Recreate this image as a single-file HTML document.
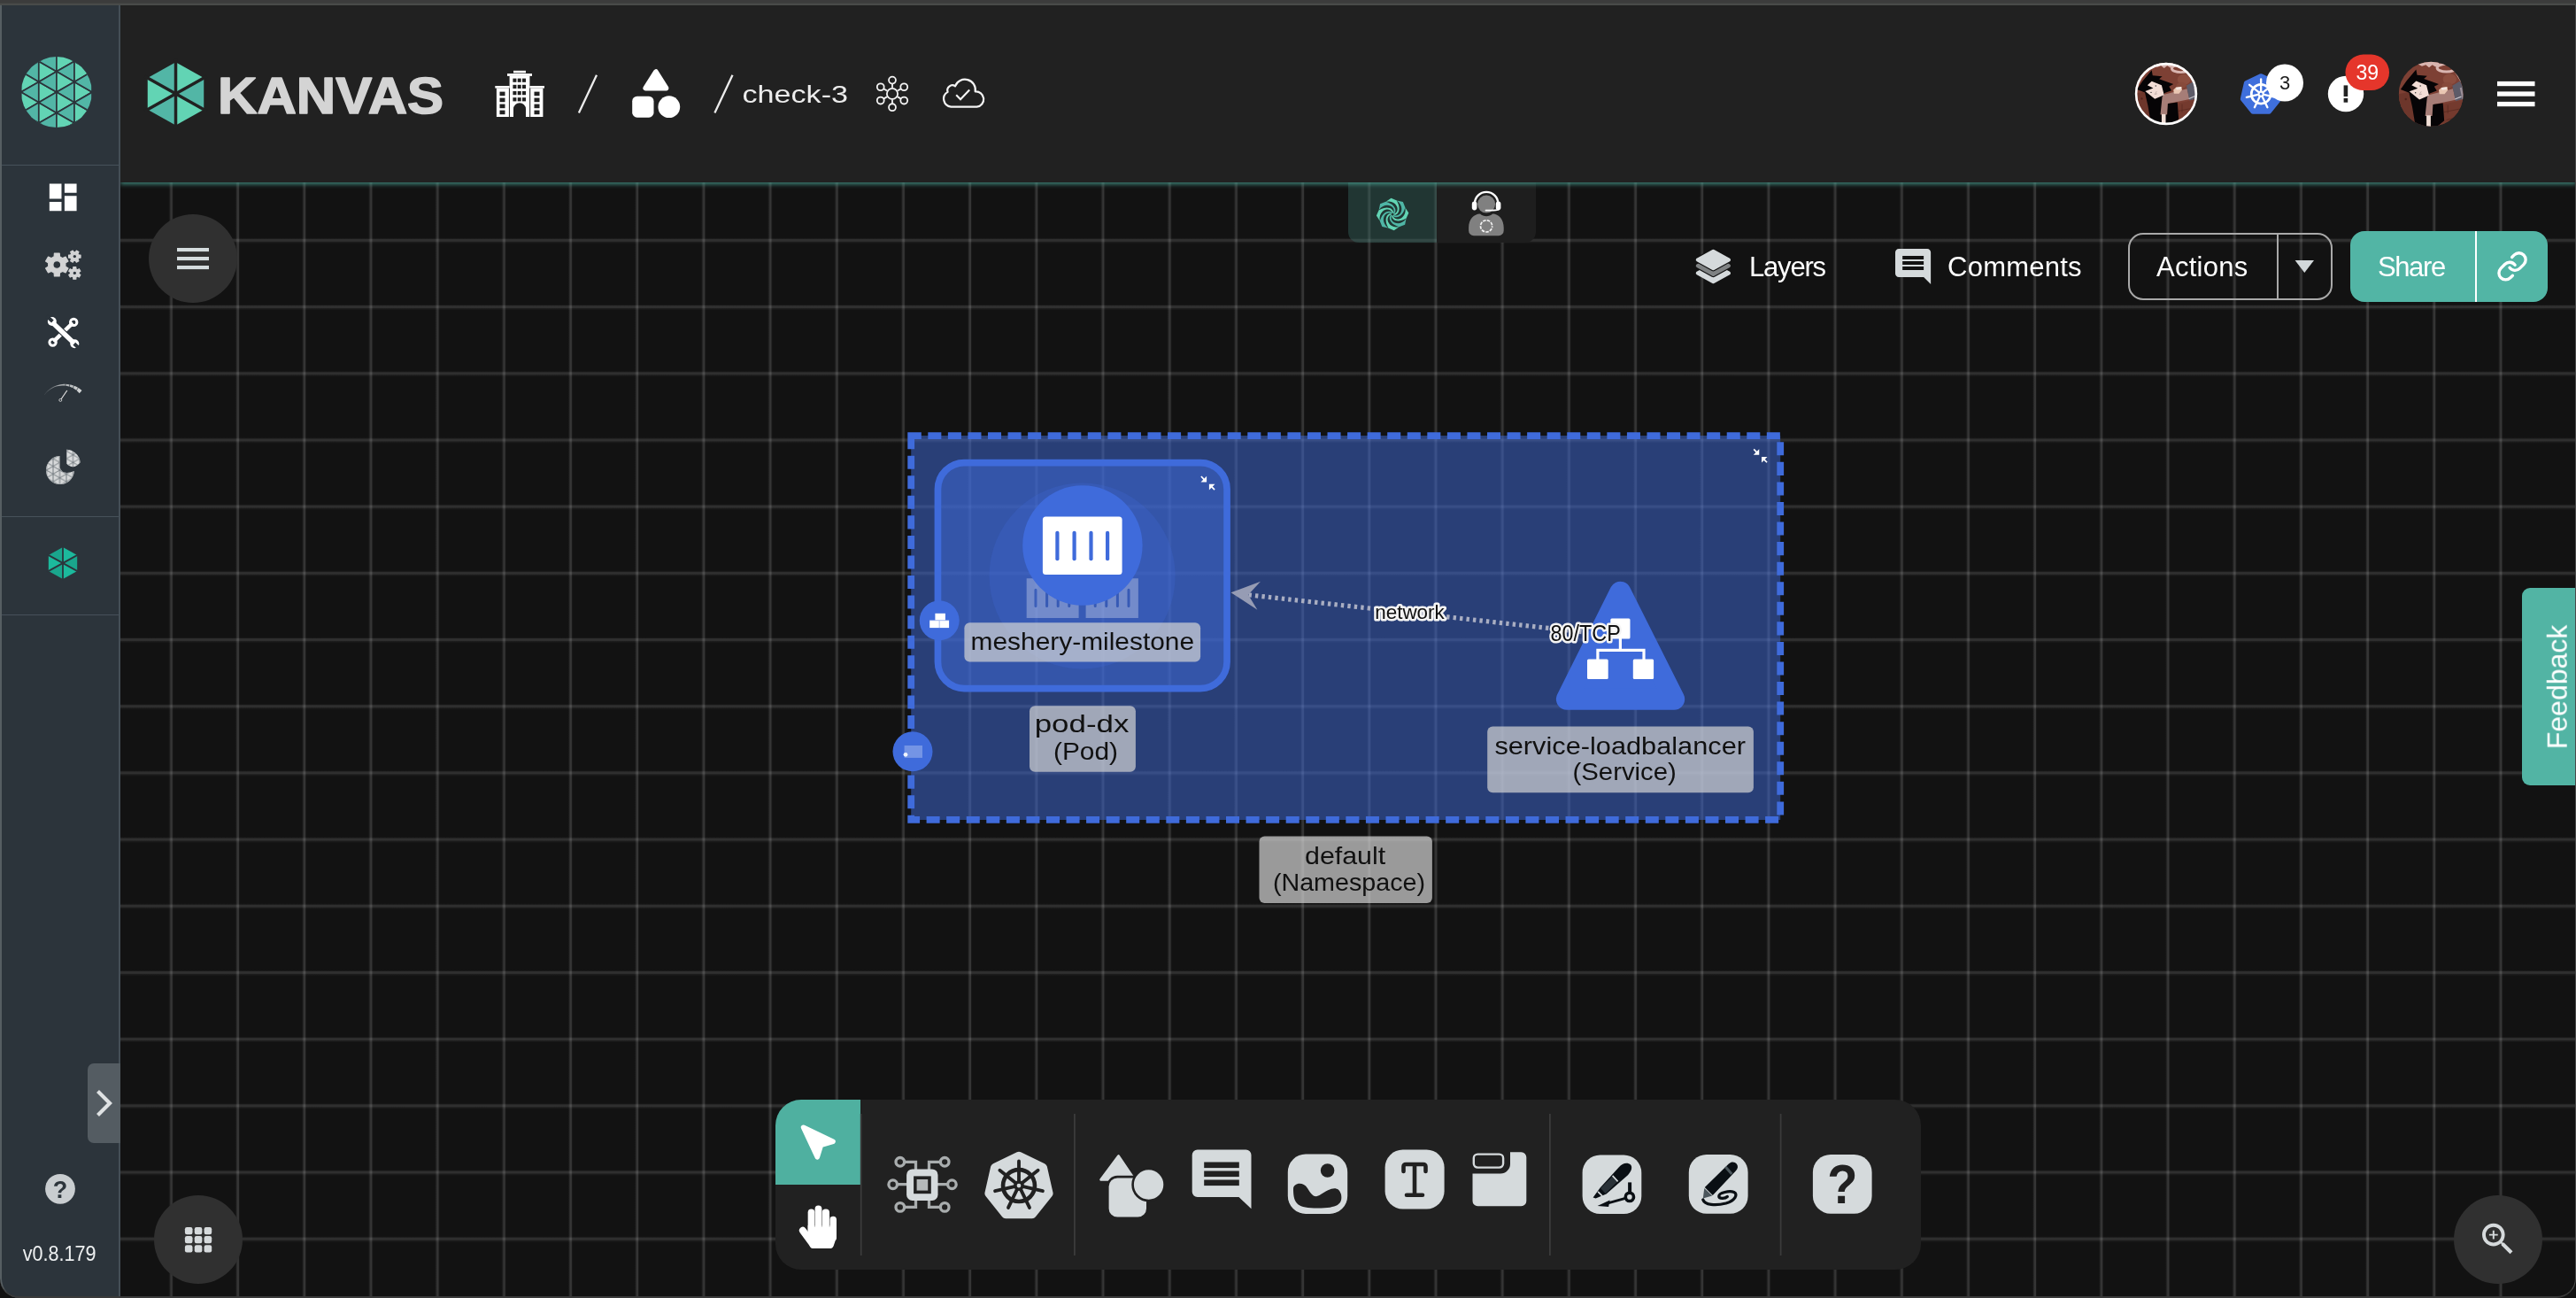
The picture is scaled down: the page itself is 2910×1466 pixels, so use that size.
<!DOCTYPE html><html lang="en"><head><meta charset="utf-8"><title>Kanvas | check-3</title><style>
*{box-sizing:border-box}
html,body{margin:0;padding:0}
body{width:2910px;height:1466px;overflow:hidden;background:#121212;font-family:"Liberation Sans",Arial,sans-serif;position:relative}
.abs{position:absolute;display:block}
svg.abs,.tbtn,#feedback span{will-change:transform}
#canvas{left:0;top:0;width:2910px;height:1466px;background-color:#121212;
 background-image:linear-gradient(to bottom,rgba(255,255,255,.025) 0,rgba(255,255,255,.03) 1.2px,rgba(255,255,255,.12) 1.5px,rgba(255,255,255,.12) 4.2px,rgba(255,255,255,.03) 4.5px,rgba(255,255,255,.025) 5.7px,transparent 5.7px);
 background-size:75.2px 75.2px;background-position:190.8px 268.9px}
#vgrid{left:0;top:0;width:2890px;height:1466px;
 background-image:linear-gradient(to right,rgba(255,255,255,.025) 0,rgba(255,255,255,.03) 1.3px,rgba(255,255,255,.15) 1.6px,rgba(255,255,255,.15) 3.8px,rgba(255,255,255,.03) 4.1px,rgba(255,255,255,.025) 5.4px,transparent 5.4px);
 background-size:75.2px 75.2px;background-position:190.8px 268.9px}
#topstrip{left:0;top:0;width:2910px;height:5.5px;background:linear-gradient(#3c3c3c 0,#3c3c3c 3.4px,#494b49 3.8px,#494b49 100%);z-index:9}
#sidebar{left:0;top:5.5px;width:136px;height:1460.5px;background:#2c343b;border-left:2px solid #565e62;border-right:2px solid #444e56;border-bottom-left-radius:22px;z-index:5}
#sidebar .div{position:absolute;left:0;width:132px;height:1.6px;background:#47515a}
#header{left:136px;top:5.5px;width:2774px;height:200.2px;background:#212121;box-shadow:0 2px 5px rgba(75,165,150,.8);z-index:4}
.fab{border-radius:50%;background:#303030;width:100px;height:100px}
#tabs{left:1523px;top:205.7px;width:212px;height:68.2px;border-radius:0 0 12px 12px;overflow:hidden}
#tabs .t1{position:absolute;left:0;top:0;width:100px;height:100%;background:rgba(58,112,104,.38)}
#tabs .t2{position:absolute;left:100px;top:0;width:112px;height:100%;background:#1e1e1e}
.tbtn{color:#fff;font-size:31px;line-height:36px;white-space:nowrap}
#actions{left:2404.3px;top:263.3px;width:230.8px;height:75.5px;border:2.2px solid #a9a9a9;border-radius:17px}
#actions .dv{position:absolute;left:165.5px;top:0;width:2.2px;height:100%;background:#a9a9a9}
#share{left:2655.1px;top:261px;width:222.9px;height:79.8px;background:#52b5a5;border-radius:16px}
#share .dv{position:absolute;left:141px;top:0;width:2.2px;height:100%;background:#fff}
#feedback{left:2849px;top:663.5px;width:61px;height:223.1px;background:#52b4a4;border-radius:9px 0 0 9px}
#feedback span{position:absolute;left:0;top:0;transform-origin:0 0;transform:translate(23.7px,182.2px) rotate(-90deg);color:#fff;font-size:32px;line-height:32px;white-space:nowrap;display:block}
#toolbar{left:876px;top:1241.7px;width:1294px;height:192.1px;background:#212121;border-radius:29px;overflow:hidden}
#toolbar .sel{position:absolute;left:0;top:0;width:96px;height:96.3px;background:#4fb0a0}
#winb{left:0;top:5.5px;width:2910px;height:1460.5px;border-right:1.7px solid #4a4a4a;border-bottom:2px solid #3a3a3a;border-radius:0 0 22px 22px;z-index:8;pointer-events:none}
</style></head><body>
<div id="canvas" class="abs"></div><div id="vgrid" class="abs"></div>
<svg class="abs" style="left:0;top:0" width="2910" height="1466" viewBox="0 0 2910 1466"><path d="M1029.2 492.1V925.9H2011.2V492.1Z" fill="rgba(63,107,219,0.5)" stroke="#3f6bdb" stroke-width="7.8" stroke-dasharray="15.04 7.52"/><rect x="1059.45" y="522.55" width="326.6" height="255" rx="30" fill="rgba(63,107,219,0.5)" stroke="#3f6bdb" stroke-width="7.7"/><circle cx="1222.6" cy="650.5" r="105" fill="rgba(63,107,219,0.25)"/><path d="M1159.7 653.2H1218.6V697.9H1159.7Z M1168.5 666.2a1.5 1.5 0 0 1 3 0v18.4a1.5 1.5 0 0 1-3 0z M1181.1 666.2a1.5 1.5 0 0 1 3 0v18.4a1.5 1.5 0 0 1-3 0z M1193.7 666.2a1.5 1.5 0 0 1 3 0v18.4a1.5 1.5 0 0 1-3 0z M1206.3 666.2a1.5 1.5 0 0 1 3 0v18.4a1.5 1.5 0 0 1-3 0z" fill="rgba(255,255,255,0.3)" fill-rule="evenodd"/><path d="M1226.6 653.2H1285.9V697.9H1226.6Z M1235.7 666.2a1.5 1.5 0 0 1 3 0v18.4a1.5 1.5 0 0 1-3 0z M1248.3 666.2a1.5 1.5 0 0 1 3 0v18.4a1.5 1.5 0 0 1-3 0z M1260.9 666.2a1.5 1.5 0 0 1 3 0v18.4a1.5 1.5 0 0 1-3 0z M1273.5 666.2a1.5 1.5 0 0 1 3 0v18.4a1.5 1.5 0 0 1-3 0z" fill="rgba(255,255,255,0.3)" fill-rule="evenodd"/><circle cx="1222.9" cy="616" r="67.7" fill="#3f6bdb"/><rect x="1177.9" y="583.6" width="89.7" height="65.3" rx="3.5" fill="#fff"/><line x1="1194.4" y1="601.8" x2="1194.4" y2="631.2" stroke="#3f6bdb" stroke-width="4.2" stroke-linecap="round"/><line x1="1213.6" y1="601.8" x2="1213.6" y2="631.2" stroke="#3f6bdb" stroke-width="4.2" stroke-linecap="round"/><line x1="1232.5" y1="601.8" x2="1232.5" y2="631.2" stroke="#3f6bdb" stroke-width="4.2" stroke-linecap="round"/><line x1="1251.1" y1="601.8" x2="1251.1" y2="631.2" stroke="#3f6bdb" stroke-width="4.2" stroke-linecap="round"/><g transform="translate(1356.3 537.4) scale(1)" fill="#fff"><path d="M0 1.2L1.2 0 4.2 3 6.8 0.4V7H0.2L2.9 4.3Z"/><path d="M16.4 15.2L15.2 16.4 12.2 13.4 9.6 16V9.4H16.2L13.5 12.1Z"/></g><g transform="translate(1980.6 506.8) scale(0.98)" fill="#fff"><path d="M0 1.2L1.2 0 4.2 3 6.8 0.4V7H0.2L2.9 4.3Z"/><path d="M16.4 15.2L15.2 16.4 12.2 13.4 9.6 16V9.4H16.2L13.5 12.1Z"/></g><rect x="1089.4" y="703.2" width="266.7" height="44.4" rx="6" fill="rgba(212,212,212,0.7)"/><text x="1096.6" y="734.3" font-family='"Liberation Sans", Arial, sans-serif' font-size="28" fill="#111" textLength="252.5" lengthAdjust="spacingAndGlyphs" >meshery-milestone</text><circle cx="1061.2" cy="700.8" r="22.5" fill="#3f6bdb"/><rect x="1056.4" y="692.8" width="11.5" height="8" fill="#fff"/><rect x="1050.2" y="700.4" width="21.9" height="8.7" fill="#fff"/><path d="M1061.2 700.4V709.1M1050.2 700.6H1072.1" stroke="rgba(63,107,219,0.35)" stroke-width="1.2"/><rect x="1163" y="797.3" width="119.9" height="74.5" rx="6" fill="rgba(212,212,212,0.7)"/><text x="1168.7" y="827" font-family='"Liberation Sans", Arial, sans-serif' font-size="28" fill="#111" textLength="106.7" lengthAdjust="spacingAndGlyphs" >pod-dx</text><text x="1190" y="857.5" font-family='"Liberation Sans", Arial, sans-serif' font-size="28" fill="#111" textLength="73" lengthAdjust="spacingAndGlyphs" >(Pod)</text><circle cx="1031" cy="848.8" r="22.5" fill="#3f6bdb"/><rect x="1021.6" y="842" width="20.4" height="13.9" fill="rgba(255,255,255,0.28)"/><circle cx="1023" cy="852.3" r="2.4" fill="#fff" opacity="0.9"/><line x1="1410.5" y1="671.9" x2="1812" y2="716.4" stroke="#a9aec2" stroke-width="5.2" stroke-dasharray="3.4 4.1"/><polygon points="1390.5,669.2 1424,656.8 1410.1,671.8 1420.4,688.7" fill="#969cb4"/><polygon points="1830.4,668.7 1769.9,789.7 1891.2,789.7" fill="#3f6bdb" stroke="#3f6bdb" stroke-width="24" stroke-linejoin="round"/><g fill="#fff"><rect x="1819.3" y="698.5" width="22.2" height="22.9" rx="1.5"/><rect x="1793" y="744.4" width="23.7" height="22.5" rx="1.5"/><rect x="1844.8" y="744.4" width="23.3" height="22.5" rx="1.5"/></g><path d="M1830.4 721V734.4M1804.9 745V734.4H1857V745" fill="none" stroke="#fff" stroke-width="3.2"/><text x="1553.2" y="698.9" font-family='"Liberation Sans", Arial, sans-serif' font-size="22.6" fill="#101010" textLength="78.6" lengthAdjust="spacingAndGlyphs" stroke="#f4f4f4" stroke-width="5.2" stroke-linejoin="round" paint-order="stroke">network</text><text x="1751.6" y="723.6" font-family='"Liberation Sans", Arial, sans-serif' font-size="26.6" fill="#101010" textLength="79.2" lengthAdjust="spacingAndGlyphs" stroke="#f4f4f4" stroke-width="5.2" stroke-linejoin="round" paint-order="stroke">80/TCP</text><rect x="1680.2" y="820.5" width="300.7" height="74.7" rx="6" fill="rgba(212,212,212,0.7)"/><text x="1688.4" y="851.6" font-family='"Liberation Sans", Arial, sans-serif' font-size="28" fill="#111" textLength="283.6" lengthAdjust="spacingAndGlyphs" >service-loadbalancer</text><text x="1776.5" y="881.2" font-family='"Liberation Sans", Arial, sans-serif' font-size="28" fill="#111" textLength="117.3" lengthAdjust="spacingAndGlyphs" >(Service)</text><rect x="1422.5" y="944.6" width="195.4" height="75.3" rx="6" fill="rgba(212,212,212,0.7)"/><text x="1474" y="975.7" font-family='"Liberation Sans", Arial, sans-serif' font-size="28" fill="#111" textLength="91.2" lengthAdjust="spacingAndGlyphs" >default</text><text x="1437.9" y="1006" font-family='"Liberation Sans", Arial, sans-serif' font-size="28" fill="#111" textLength="172.2" lengthAdjust="spacingAndGlyphs" >(Namespace)</text></svg>
<div id="tabs" class="abs"><div class="t1"></div><div class="t2"></div></div>
<div class="abs fab" style="left:168px;top:242px"></div>
<div class="abs fab" style="left:174px;top:1350px"></div>
<div class="abs fab" style="left:2772px;top:1350px"></div>
<div class="abs tbtn" style="left:1975.5px;top:284px;letter-spacing:-1.2px">Layers</div>
<div class="abs tbtn" style="left:2200px;top:284px;letter-spacing:0.25px">Comments</div>
<div id="actions" class="abs"><div class="dv"></div></div>
<div class="abs tbtn" style="left:2436px;top:284px;letter-spacing:0.25px">Actions</div>
<div id="share" class="abs"><div class="dv"></div></div>
<div class="abs tbtn" style="left:2686px;top:284px;letter-spacing:-1.4px">Share</div>
<div id="feedback" class="abs"><span>Feedback</span></div>
<div id="toolbar" class="abs"><div class="sel"></div></div>
<svg class="abs" style="left:0;top:0" width="2910" height="1466" viewBox="0 0 2910 1466"><polygon points="907.6,1273.2 941,1289.2 927.4,1293.4 923.3,1306.8" fill="#fff" stroke="#fff" stroke-width="5.6" stroke-linejoin="round"/><g fill="#fff"><rect x="912.65" y="1365.6" width="7.7" height="32" rx="3.8"/><rect x="920.6" y="1361.6" width="7.8" height="34" rx="3.85"/><rect x="928.7" y="1365.4" width="8.3" height="32" rx="4"/><rect x="937.4" y="1373.7" width="7.6" height="28" rx="3.8"/><path d="M912.65 1384H945V1393C945 1397 943 1404 941.5 1407.5 940.8 1409.2 939.8 1409.9 938.5 1409.9H918.5C917 1409.9 916 1409.3 915 1408L912.65 1400Z"/><path d="M906.9 1389.8L918.5 1405.5" stroke="#fff" stroke-width="8" stroke-linecap="round"/></g><path d="M920.45 1369.5V1385.6M928.55 1366.5V1385.6M937.2 1374V1385.6" stroke="#8f8f8f" stroke-width="0.7"/><rect x="971.8" y="1258" width="1.8" height="160" fill="#3b3b3b"/><rect x="1213" y="1258" width="1.8" height="160" fill="#3b3b3b"/><rect x="1750" y="1258" width="1.8" height="160" fill="#3b3b3b"/><rect x="2010.7" y="1258" width="1.8" height="160" fill="#3b3b3b"/><g fill="none" stroke="#a9adae" stroke-width="3.3"><circle cx="1008.7" cy="1337.7" r="4.8"/><circle cx="1075.4" cy="1337.7" r="4.8"/><path d="M1013.5 1337.7H1025M1059 1337.7H1070.6"/><circle cx="1016.8" cy="1312.3" r="4.8"/><path d="M1021.6 1312.3H1034.5V1321"/><circle cx="1067.2" cy="1312.3" r="4.8"/><path d="M1062.4 1312.3H1049.5V1321"/><circle cx="1016.8" cy="1363.4" r="4.8"/><path d="M1021.6 1363.4H1034.5V1355"/><circle cx="1067.2" cy="1363.4" r="4.8"/><path d="M1062.4 1363.4H1049.5V1355"/></g><rect x="1024.1" y="1320.4" width="35.4" height="35.5" rx="6.5" fill="#d5dadc"/><rect x="1032.1" y="1328.4" width="19.7" height="19.8" fill="#212121"/><rect x="1035.6" y="1332" width="12.6" height="12.6" fill="#b5b9ba"/><polygon points="1151,1305.83 1177.83,1318.75 1184.46,1347.79 1165.89,1371.07 1136.11,1371.07 1117.54,1347.79 1124.17,1318.75" fill="#d5dadc" stroke="#d5dadc" stroke-width="10.26" stroke-linejoin="round"/><circle cx="1151" cy="1339.05" r="17.95" fill="none" stroke="#212121" stroke-width="4.64"/><line x1="1151" y1="1335.11" x2="1151" y2="1311.44" stroke="#212121" stroke-width="3.87" stroke-linecap="round"/><line x1="1154.08" y1="1336.59" x2="1172.59" y2="1321.83" stroke="#212121" stroke-width="3.87" stroke-linecap="round"/><line x1="1154.85" y1="1339.93" x2="1177.92" y2="1345.19" stroke="#212121" stroke-width="3.87" stroke-linecap="round"/><line x1="1152.71" y1="1342.6" x2="1162.98" y2="1363.93" stroke="#212121" stroke-width="3.87" stroke-linecap="round"/><line x1="1149.29" y1="1342.6" x2="1139.02" y2="1363.93" stroke="#212121" stroke-width="3.87" stroke-linecap="round"/><line x1="1147.15" y1="1339.93" x2="1124.08" y2="1345.19" stroke="#212121" stroke-width="3.87" stroke-linecap="round"/><line x1="1147.92" y1="1336.59" x2="1129.41" y2="1321.83" stroke="#212121" stroke-width="3.87" stroke-linecap="round"/><circle cx="1151" cy="1339.05" r="5.92" fill="#212121"/><circle cx="1151" cy="1339.05" r="2.37" fill="#d5dadc"/><polygon points="1263.5,1305.6 1243.6,1332.4 1281.6,1332.4" fill="#d5dadc" stroke="#d5dadc" stroke-width="2.8" stroke-linejoin="round"/><rect x="1251.3" y="1329.1" width="45" height="46.8" rx="11" fill="#d5dadc" stroke="#212121" stroke-width="2.6"/><circle cx="1297.6" cy="1338" r="18" fill="#d5dadc" stroke="#212121" stroke-width="2.6"/><path d="M1352.7 1298.5H1407.5a6 6 0 0 1 6 6V1365.2L1399.5 1352H1352.7a6 6 0 0 1-6-6V1304.5a6 6 0 0 1 6-6Z" fill="#d5dadc"/><rect x="1360.2" y="1312.5" width="39.6" height="6.6" fill="#212121"/><rect x="1360.2" y="1322.5" width="39.6" height="6.6" fill="#212121"/><rect x="1360.2" y="1332.5" width="39.6" height="6.6" fill="#212121"/><rect x="1454.8" y="1303.5" width="67.4" height="67.4" rx="20.22" fill="#d5dadc"/><circle cx="1499.6" cy="1322" r="7.8" fill="#212121"/><path d="M1461 1343C1461 1336 1472 1334 1477 1342 1483 1352 1486 1353 1492 1349 1502 1342 1512 1338 1515 1349 1517 1360 1511 1364.5 1488.5 1364.5 1466 1364.5 1461 1360 1461 1343Z" fill="#212121"/><rect x="1564.6" y="1298.5" width="67" height="67" rx="20.1" fill="#d5dadc"/><path d="M1585.5 1323V1317.5a2.5 2.5 0 0 1 2.5-2.5H1608a2.5 2.5 0 0 1 2.5 2.5V1323M1598 1315V1349.5M1589 1349.8H1607" fill="none" stroke="#212121" stroke-width="4.6" stroke-linecap="round" stroke-linejoin="round"/><path d="M1706 1301.3H1718.5a5.8 5.8 0 0 1 5.8 5.8V1356.4a5.8 5.8 0 0 1-5.8 5.8H1669.3a5.8 5.8 0 0 1-5.8-5.8V1325.5H1695a11 11 0 0 0 11-11Z" fill="#d5dadc"/><rect x="1664.8" y="1303.6" width="33.3" height="15" rx="4.5" fill="none" stroke="#d5dadc" stroke-width="2.4"/><rect x="1787.6" y="1304.4" width="66.7" height="66.7" rx="20.01" fill="#d5dadc"/><rect x="1907.8" y="1304" width="66.8" height="66.8" rx="20.04" fill="#d5dadc"/><rect x="2047.9" y="1304" width="66.7" height="66.7" rx="20.01" fill="#d5dadc"/><g transform="translate(1787.6 1304.4)"><path d="M12 48L20 37 41 14C45 9 51 8 54.5 11 57 14 55 19 51 23L27 44 15 49Z" fill="#0a0f14"/><path d="M20.5 37.5L34 24 39.5 30 26 43.5Z" fill="#2a3238"/><path d="M17.5 41.5L22.5 46.5" stroke="#d5dadc" stroke-width="1.6"/><path d="M34 23.5L40 30" stroke="#d5dadc" stroke-width="1.6"/><path d="M53.5 31V42" stroke="#0a0f14" stroke-width="4"/><circle cx="53.3" cy="47.5" r="4.6" fill="none" stroke="#0a0f14" stroke-width="3.6"/><path d="M48.5 49L27 55" stroke="#0a0f14" stroke-width="3"/><path d="M17 57.5L31 51 29.5 58.5Z" fill="#0a0f14"/></g><g transform="translate(1907.8 1304)"><path d="M18 37L45 10.5C48 7.5 52 8 54 10.5 56 13 55.5 16 53 18.5L27 46Z" fill="#0a0f14"/><path d="M41.5 14L48.5 22" stroke="#4b565c" stroke-width="3"/><path d="M17.5 38L26.5 46.5 16 49.5Z" fill="#4b565c"/><path d="M16 51C18 57 30 58 42 55 52 52 56 45 51 42.5 46 40.5 34 43 34 47 34 50 41 50 43.5 47.5" fill="none" stroke="#0a0f14" stroke-width="3.3" stroke-linecap="round"/></g><text transform="translate(2081.3 1358.8) scale(0.88 1)" x="0" y="0" text-anchor="middle" font-family='"Liberation Sans", Arial, sans-serif' font-weight="bold" font-size="63.5" fill="#212121">?</text></svg>
<svg class="abs" style="left:0;top:0" width="2910" height="1466" viewBox="0 0 2910 1466"><polygon points="1574.47,241.7 1575.47,241.34 1576.4,240.78 1577.22,240.03 1577.91,239.08 1578.4,237.93 1578.64,236.6 1578.58,235.11 1578.14,233.53 1577.27,231.92 1575.94,230.37 1574.12,229.01 1571.8,227.98 1569.02,227.42 1565.62,227.63 1571.51,223.77 1577.97,226.55 1578.43,227.83 1579.11,229.27 1579.72,230.78 1580.18,232.35 1580.47,233.96 1580.57,235.57 1580.44,237.14 1580.07,238.64 1579.48,239.99 1578.66,241.15 1577.67,242.04 1576.56,242.63 1575.4,242.87 1574.28,242.75" fill="#62d4b4"/><polygon points="1574.28,242.75 1575.24,243.21 1576.29,243.47 1577.41,243.52 1578.57,243.34 1579.73,242.87 1580.84,242.1 1581.84,241 1582.65,239.57 1583.18,237.82 1583.33,235.79 1583,233.54 1582.1,231.17 1580.53,228.81 1577.97,226.55 1584.86,227.98 1587.47,234.52 1586.89,235.75 1586.36,237.25 1585.71,238.74 1584.93,240.18 1584,241.53 1582.93,242.73 1581.72,243.75 1580.41,244.55 1579.03,245.09 1577.64,245.33 1576.3,245.26 1575.1,244.89 1574.11,244.24 1573.4,243.37" fill="#4fb6a6"/><polygon points="1573.4,243.37 1573.76,244.37 1574.32,245.3 1575.07,246.12 1576.02,246.81 1577.17,247.3 1578.5,247.54 1579.99,247.48 1581.57,247.04 1583.18,246.17 1584.73,244.84 1586.09,243.02 1587.12,240.7 1587.68,237.92 1587.47,234.52 1591.33,240.41 1588.55,246.87 1587.27,247.33 1585.83,248.01 1584.32,248.62 1582.75,249.08 1581.14,249.37 1579.53,249.47 1577.96,249.34 1576.46,248.97 1575.11,248.38 1573.95,247.56 1573.06,246.57 1572.47,245.46 1572.23,244.3 1572.35,243.18" fill="#62d4b4"/><polygon points="1572.35,243.18 1571.89,244.14 1571.63,245.19 1571.58,246.31 1571.76,247.47 1572.23,248.63 1573,249.74 1574.1,250.74 1575.53,251.55 1577.28,252.08 1579.31,252.23 1581.56,251.9 1583.93,251 1586.29,249.43 1588.55,246.87 1587.12,253.76 1580.58,256.37 1579.35,255.79 1577.85,255.26 1576.36,254.61 1574.92,253.83 1573.57,252.9 1572.37,251.83 1571.35,250.62 1570.55,249.31 1570.01,247.93 1569.77,246.54 1569.84,245.2 1570.21,244 1570.86,243.01 1571.73,242.3" fill="#4fb6a6"/><polygon points="1571.73,242.3 1570.73,242.66 1569.8,243.22 1568.98,243.97 1568.29,244.92 1567.8,246.07 1567.56,247.4 1567.62,248.89 1568.06,250.47 1568.93,252.08 1570.26,253.63 1572.08,254.99 1574.4,256.02 1577.18,256.58 1580.58,256.37 1574.69,260.23 1568.23,257.45 1567.77,256.17 1567.09,254.73 1566.48,253.22 1566.02,251.65 1565.73,250.04 1565.63,248.43 1565.76,246.86 1566.13,245.36 1566.72,244.01 1567.54,242.85 1568.53,241.96 1569.64,241.37 1570.8,241.13 1571.92,241.25" fill="#62d4b4"/><polygon points="1571.92,241.25 1570.96,240.79 1569.91,240.53 1568.79,240.48 1567.63,240.66 1566.47,241.13 1565.36,241.9 1564.36,243 1563.55,244.43 1563.02,246.18 1562.87,248.21 1563.2,250.46 1564.1,252.83 1565.67,255.19 1568.23,257.45 1561.34,256.02 1558.73,249.48 1559.31,248.25 1559.84,246.75 1560.49,245.26 1561.27,243.82 1562.2,242.47 1563.27,241.27 1564.48,240.25 1565.79,239.45 1567.17,238.91 1568.56,238.67 1569.9,238.74 1571.1,239.11 1572.09,239.76 1572.8,240.63" fill="#4fb6a6"/><polygon points="1572.8,240.63 1572.44,239.63 1571.88,238.7 1571.13,237.88 1570.18,237.19 1569.03,236.7 1567.7,236.46 1566.21,236.52 1564.63,236.96 1563.02,237.83 1561.47,239.16 1560.11,240.98 1559.08,243.3 1558.52,246.08 1558.73,249.48 1554.87,243.59 1557.65,237.13 1558.93,236.67 1560.37,235.99 1561.88,235.38 1563.45,234.92 1565.06,234.63 1566.67,234.53 1568.24,234.66 1569.74,235.03 1571.09,235.62 1572.25,236.44 1573.14,237.43 1573.73,238.54 1573.97,239.7 1573.85,240.82" fill="#62d4b4"/><polygon points="1573.85,240.82 1574.31,239.86 1574.57,238.81 1574.62,237.69 1574.44,236.53 1573.97,235.37 1573.2,234.26 1572.1,233.26 1570.67,232.45 1568.92,231.92 1566.89,231.77 1564.64,232.1 1562.27,233 1559.91,234.57 1557.65,237.13 1559.08,230.24 1565.62,227.63 1566.85,228.21 1568.35,228.74 1569.84,229.39 1571.28,230.17 1572.63,231.1 1573.83,232.17 1574.85,233.38 1575.65,234.69 1576.19,236.07 1576.43,237.46 1576.36,238.8 1575.99,240 1575.34,240.99 1574.47,241.7" fill="#4fb6a6"/><path d="M1659.1 257C1659.1 248 1665 241.6 1672 241.6 1676 245.2 1682.2 245.2 1686.2 241.6 1693 241.6 1698.7 248 1698.7 257V260.5a5.8 5.8 0 0 1-5.8 5.8H1664.9a5.8 5.8 0 0 1-5.8-5.8Z" fill="#808080"/><circle cx="1679.1" cy="230.6" r="10" fill="#808080"/><path d="M1666 229.5a13.1 12.6 0 0 1 26.2 0" fill="none" stroke="#fff" stroke-width="2.4"/><rect x="1662.8" y="227.6" width="5.6" height="9.8" rx="2.8" fill="#fff"/><rect x="1689.8" y="227.6" width="5.6" height="9.8" rx="2.8" fill="#fff"/><path d="M1692.6 236.5C1691 238 1686 237.6 1678.5 237.6" fill="none" stroke="#fff" stroke-width="1.8" stroke-linecap="round"/><circle cx="1679.1" cy="255.4" r="6.6" fill="none" stroke="#f2f2f2" stroke-width="1.7" stroke-dasharray="3.6 1.2" stroke-dashoffset="2"/><polygon points="1935.4,298.75 1953.05,308.55 1935.4,318.35 1917.75,308.55" fill="#d5dadc" stroke="#d5dadc" stroke-width="4" stroke-linejoin="round" paint-order="normal"/><polygon points="1935.4,290.35 1953.05,300.15 1935.4,309.95 1917.75,300.15" fill="#121212" stroke="#121212" stroke-width="6.4" stroke-linejoin="round"/><polygon points="1935.4,290.35 1953.05,300.15 1935.4,309.95 1917.75,300.15" fill="#7f8283" stroke="#7f8283" stroke-width="4" stroke-linejoin="round" paint-order="normal"/><polygon points="1935.4,283.65 1953.05,293.45 1935.4,303.25 1917.75,293.45" fill="#121212" stroke="#121212" stroke-width="6.4" stroke-linejoin="round"/><polygon points="1935.4,283.65 1953.05,293.45 1935.4,303.25 1917.75,293.45" fill="#d5dadc" stroke="#d5dadc" stroke-width="4" stroke-linejoin="round" paint-order="normal"/><path transform="translate(2137 276.9) scale(2.006)" fill="#d5dadc" d="M21.99 4c0-1.1-.89-2-1.99-2H4c-1.1 0-2 .9-2 2v12c0 1.1.9 2 2 2h14l4 4-.01-18zM18 14H6v-2h12v2zm0-3H6V9h12v2zm0-3H6V6h12v2z"/><polygon points="2592.6,294.1 2614,294.1 2603.3,307.9" fill="#d2d8da"/><g transform="translate(2819.8 282.6) scale(1.52)" fill="none" stroke="#fff" stroke-width="2.2" stroke-linecap="round" stroke-linejoin="round"><path d="M10 13a5 5 0 0 0 7.54.54l3-3a5 5 0 0 0-7.07-7.07l-1.72 1.71"/><path d="M14 11a5 5 0 0 0-7.54-.54l-3 3a5 5 0 0 0 7.07 7.07l1.71-1.71"/></g><rect x="200" y="280" width="36" height="4.1" fill="#d5dcde"/><rect x="200" y="290" width="36" height="4.1" fill="#d5dcde"/><rect x="200" y="300" width="36" height="4.1" fill="#d5dcde"/><rect x="208.9" y="1386" width="8.6" height="8.2" rx="2.2" fill="#d6dadc"/><rect x="219.75" y="1386" width="8.6" height="8.2" rx="2.2" fill="#d6dadc"/><rect x="230.6" y="1386" width="8.6" height="8.2" rx="2.2" fill="#d6dadc"/><rect x="208.9" y="1396.1" width="8.6" height="8.2" rx="2.2" fill="#d6dadc"/><rect x="219.75" y="1396.1" width="8.6" height="8.2" rx="2.2" fill="#d6dadc"/><rect x="230.6" y="1396.1" width="8.6" height="8.2" rx="2.2" fill="#d6dadc"/><rect x="208.9" y="1406.2" width="8.6" height="8.2" rx="2.2" fill="#d6dadc"/><rect x="219.75" y="1406.2" width="8.6" height="8.2" rx="2.2" fill="#d6dadc"/><rect x="230.6" y="1406.2" width="8.6" height="8.2" rx="2.2" fill="#d6dadc"/><path transform="translate(2798.1 1375.9) scale(1.97)" fill="#d6dadc" d="M15.5 14h-.79l-.28-.27C15.41 12.59 16 11.11 16 9.5 16 5.91 13.09 3 9.5 3S3 5.91 3 9.5 5.91 16 9.5 16c1.61 0 3.09-.59 4.23-1.57l.27.28v.79l5 4.99L20.49 19l-4.99-5zm-6 0C7.01 14 5 11.99 5 9.5S7.01 5 9.5 5 14 7.01 14 9.5 11.99 14 9.5 14zM12 10h-2v2H9v-2H7V9h2V7h1v2h2v1z"/></svg>
<div id="header" class="abs"></div>
<div style="position:absolute;left:0;top:0;z-index:6"><svg class="abs" style="left:136px;top:0" width="2774" height="206" viewBox="136 0 2774 206"><polygon points="198.5,105.9 198.5,70.25 230.25,88.08" fill="#62d4b4"/><polygon points="198.5,105.9 230.25,88.08 230.25,123.73" fill="#52b6a6"/><polygon points="198.5,105.9 230.25,123.73 198.5,141.55" fill="#62d4b4"/><polygon points="198.5,105.9 198.5,141.55 166.75,123.73" fill="#52b6a6"/><polygon points="198.5,105.9 166.75,123.73 166.75,88.08" fill="#62d4b4"/><polygon points="198.5,105.9 166.75,88.08 198.5,70.25" fill="#52b6a6"/><line x1="198.5" y1="66.69" x2="198.5" y2="145.12" stroke="#212121" stroke-width="3.5"/><line x1="233.43" y1="86.29" x2="163.57" y2="125.51" stroke="#212121" stroke-width="3.5"/><line x1="233.43" y1="125.51" x2="163.57" y2="86.29" stroke="#212121" stroke-width="3.5"/><text x="246.1" y="128.3" font-family='"Liberation Sans", Arial, sans-serif' font-weight="bold" font-size="56.8" fill="#d4d4d4" stroke="#d4d4d4" stroke-width="1.6" stroke-linejoin="round" textLength="254.9" lengthAdjust="spacingAndGlyphs">KANVAS</text><g transform="translate(559.3 79.8)"><rect x="20.7" y="0" width="14" height="2.6" fill="#fff"/><rect x="13.7" y="3.3" width="28" height="2.8" fill="#fff"/><rect x="16.3" y="6" width="22.8" height="46.2" fill="#fff"/><rect x="0" y="17.2" width="16.3" height="2.6" fill="#fff"/><rect x="1.6" y="19.8" width="14.7" height="32.4" fill="#fff"/><rect x="39.1" y="17.2" width="16.6" height="2.6" fill="#fff"/><rect x="39.1" y="19.8" width="15" height="32.4" fill="#fff"/><rect x="20.1" y="8.8" width="4" height="4.2" fill="#212121"/><rect x="25.4" y="8.8" width="4" height="4.2" fill="#212121"/><rect x="30.7" y="8.8" width="4" height="4.2" fill="#212121"/><rect x="20.1" y="16" width="4" height="4.2" fill="#212121"/><rect x="25.4" y="16" width="4" height="4.2" fill="#212121"/><rect x="30.7" y="16" width="4" height="4.2" fill="#212121"/><rect x="20.1" y="23.2" width="4" height="4.2" fill="#212121"/><rect x="25.4" y="23.2" width="4" height="4.2" fill="#212121"/><rect x="30.7" y="23.2" width="4" height="4.2" fill="#212121"/><rect x="20.1" y="30.4" width="4" height="4.2" fill="#212121"/><rect x="25.4" y="30.4" width="4" height="4.2" fill="#212121"/><rect x="30.7" y="30.4" width="4" height="4.2" fill="#212121"/><rect x="5.2" y="23.8" width="6" height="4.6" fill="#212121"/><rect x="44.2" y="23.8" width="6" height="4.6" fill="#212121"/><rect x="5.2" y="30.8" width="6" height="4.6" fill="#212121"/><rect x="44.2" y="30.8" width="6" height="4.6" fill="#212121"/><rect x="5.2" y="37.8" width="6" height="4.6" fill="#212121"/><rect x="44.2" y="37.8" width="6" height="4.6" fill="#212121"/><rect x="5.2" y="44.8" width="6" height="4.6" fill="#212121"/><rect x="44.2" y="44.8" width="6" height="4.6" fill="#212121"/><rect x="15.6" y="19.8" width="1" height="32.4" fill="#212121"/><rect x="38.9" y="19.8" width="1" height="32.4" fill="#212121"/><path d="M20.7 52.2V43.5a7 7 0 0 1 14 0V52.2Z" fill="#212121"/></g><line x1="653.9" y1="127.4" x2="674" y2="84.7" stroke="#ececec" stroke-width="2.3"/><line x1="807.4" y1="127.4" x2="827.5" y2="84.7" stroke="#ececec" stroke-width="2.3"/><polygon points="740.9,81 729.2,99.6 752.6,99.6" fill="#fff" stroke="#fff" stroke-width="5.6" stroke-linejoin="round"/><rect x="714.2" y="108.7" width="24.3" height="24" rx="5.5" fill="#fff"/><circle cx="755.8" cy="120.7" r="12.4" fill="#fff"/><text x="838.5" y="116.4" font-family='"Liberation Sans", Arial, sans-serif' font-size="28.3" fill="#ececec" textLength="119.5" lengthAdjust="spacingAndGlyphs">check-3</text><g fill="none" stroke="#f4f4f4" stroke-width="1.8"><circle cx="1008" cy="105.9" r="6.1"/><circle cx="1008" cy="90.6" r="3.95"/><line x1="1008" y1="98.9" x2="1008" y2="94.5"/><circle cx="1021.25" cy="98.25" r="3.95"/><line x1="1014.06" y1="102.4" x2="1017.87" y2="100.2"/><circle cx="1021.25" cy="113.55" r="3.95"/><line x1="1014.06" y1="109.4" x2="1017.87" y2="111.6"/><circle cx="1008" cy="121.2" r="3.95"/><line x1="1008" y1="112.9" x2="1008" y2="117.3"/><circle cx="994.75" cy="113.55" r="3.95"/><line x1="1001.94" y1="109.4" x2="998.13" y2="111.6"/><circle cx="994.75" cy="98.25" r="3.95"/><line x1="1001.94" y1="102.4" x2="998.13" y2="100.2"/></g><g fill="none" stroke="#f4f4f4" stroke-width="2.2" stroke-linejoin="round"><path d="M1074.3 120.6A9 9 0 0 1 1070.6 103.85A5.6 5.6 0 0 1 1079 97.3A11.82 11.82 0 0 1 1101.7 103.5A8.55 8.55 0 0 1 1103.5 120.6Z"/><path d="M1080.2 107.3L1085 112.2 1095.2 101.4" stroke-linejoin="miter"/></g><clipPath id="av1"><circle cx="50" cy="50" r="50"/></clipPath><g transform="translate(2411.8 70.8) scale(0.7)"><g clip-path="url(#av1)"><rect width="100" height="100" fill="#7d4034"/><path d="M30 4L36 -1H62L63 5 57 8 52 5 47 9 42 5 36 7Z" fill="#d9b5b0"/><ellipse cx="74" cy="9.5" rx="14.5" ry="6" fill="none" stroke="#d9b5b0" stroke-width="4.2"/><path d="M86 12L97 30" stroke="#d9b5b0" stroke-width="3"/><ellipse cx="79" cy="27" rx="10.5" ry="8.5" fill="#8c4e3f"/><ellipse cx="75" cy="36.5" rx="8" ry="5" fill="#874a3b"/><path d="M0 50L15 47C21 58 24 80 26 100H0Z" fill="#6d362b"/><circle cx="11" cy="58" r="1.6" fill="#4f241c"/><path d="M68 66L100 59V100H68Z" fill="#743a2e"/><path d="M70 78L100 72M74 90L100 84M76 67V80" stroke="#5a2a21" stroke-width="1.1" fill="none"/><path d="M44 52L84 42 88 59 54 66 52 84H40L42 60Z" fill="#a67d77"/><path d="M3 43L12 30 27 12 28.5 20.5 44 22 39 26.5 62 34.5 55 38.5 59 45 48 49 44 55 41 84 52 84 53 66 68.5 64 70.5 91 60 100H26L21 70 16 48Z" fill="#060406"/><path d="M20 36.5L27 30 43 36.5 47 52 32 58.5 16.5 46 29.5 41Z" fill="#f2ddd6"/><circle cx="33.5" cy="37.5" r="1" fill="#333"/><circle cx="26" cy="48" r="1" fill="#333"/><path d="M35 46L32 51 36 50" stroke="#9a8a86" stroke-width="0.7" fill="none"/><rect x="43" y="83" width="6.6" height="18" fill="#f0ddd5"/><path d="M62 44L66 40 75 39 76 44 71 50 63 50Z" fill="#e9c6b2"/><path d="M66 40L75 39 74 43 67 44Z" fill="#f3e6e0"/><path d="M83 37L95 30 100 40 99 58 88 61Z" fill="#5d5b68"/><path d="M87 58L97 54" stroke="#c9c5cc" stroke-width="1.6"/><path d="M96 40L100 58" stroke="#9c8f98" stroke-width="3"/></g></g><circle cx="2447" cy="106" r="33.9" fill="none" stroke="#fff" stroke-width="2.6"/><polygon points="2554.15,86.25 2570.37,94.06 2574.38,111.62 2563.15,125.69 2545.15,125.69 2533.92,111.62 2537.93,94.06" fill="#3f6fdc" stroke="#3f6fdc" stroke-width="6.2" stroke-linejoin="round"/><circle cx="2554.15" cy="106.2" r="10.85" fill="none" stroke="#fff" stroke-width="2.8"/><line x1="2554.15" y1="103.81" x2="2554.15" y2="89.5" stroke="#fff" stroke-width="2.34" stroke-linecap="round"/><line x1="2556.01" y1="104.71" x2="2567.2" y2="95.79" stroke="#fff" stroke-width="2.34" stroke-linecap="round"/><line x1="2556.48" y1="106.73" x2="2570.43" y2="109.91" stroke="#fff" stroke-width="2.34" stroke-linecap="round"/><line x1="2555.18" y1="108.35" x2="2561.39" y2="121.24" stroke="#fff" stroke-width="2.34" stroke-linecap="round"/><line x1="2553.12" y1="108.35" x2="2546.91" y2="121.24" stroke="#fff" stroke-width="2.34" stroke-linecap="round"/><line x1="2551.82" y1="106.73" x2="2537.87" y2="109.91" stroke="#fff" stroke-width="2.34" stroke-linecap="round"/><line x1="2552.29" y1="104.71" x2="2541.1" y2="95.79" stroke="#fff" stroke-width="2.34" stroke-linecap="round"/><circle cx="2554.15" cy="106.2" r="3.58" fill="#fff"/><circle cx="2554.15" cy="106.2" r="1.43" fill="#3f6fdc"/><circle cx="2581" cy="93.5" r="21" fill="#fff"/><text x="2581" y="101.2" text-anchor="middle" font-family='"Liberation Sans", Arial, sans-serif' font-size="22" fill="#1c1c1c">3</text><circle cx="2650" cy="106" r="20.2" fill="#fff"/><rect x="2647.6" y="96.4" width="4.6" height="12.6" fill="#222"/><rect x="2647.6" y="111" width="4.6" height="4.7" fill="#222"/><rect x="2649.5" y="61.6" width="49.5" height="40.5" rx="20.25" fill="#e5362b"/><text x="2674.3" y="90" text-anchor="middle" font-family='"Liberation Sans", Arial, sans-serif' font-size="23" fill="#fff">39</text><clipPath id="av2"><circle cx="50" cy="50" r="50"/></clipPath><g transform="translate(2709.7 69.7) scale(0.73)"><g clip-path="url(#av2)"><rect width="100" height="100" fill="#7d4034"/><path d="M30 4L36 -1H62L63 5 57 8 52 5 47 9 42 5 36 7Z" fill="#d9b5b0"/><ellipse cx="74" cy="9.5" rx="14.5" ry="6" fill="none" stroke="#d9b5b0" stroke-width="4.2"/><path d="M86 12L97 30" stroke="#d9b5b0" stroke-width="3"/><ellipse cx="79" cy="27" rx="10.5" ry="8.5" fill="#8c4e3f"/><ellipse cx="75" cy="36.5" rx="8" ry="5" fill="#874a3b"/><path d="M0 50L15 47C21 58 24 80 26 100H0Z" fill="#6d362b"/><circle cx="11" cy="58" r="1.6" fill="#4f241c"/><path d="M68 66L100 59V100H68Z" fill="#743a2e"/><path d="M70 78L100 72M74 90L100 84M76 67V80" stroke="#5a2a21" stroke-width="1.1" fill="none"/><path d="M44 52L84 42 88 59 54 66 52 84H40L42 60Z" fill="#a67d77"/><path d="M3 43L12 30 27 12 28.5 20.5 44 22 39 26.5 62 34.5 55 38.5 59 45 48 49 44 55 41 84 52 84 53 66 68.5 64 70.5 91 60 100H26L21 70 16 48Z" fill="#060406"/><path d="M20 36.5L27 30 43 36.5 47 52 32 58.5 16.5 46 29.5 41Z" fill="#f2ddd6"/><circle cx="33.5" cy="37.5" r="1" fill="#333"/><circle cx="26" cy="48" r="1" fill="#333"/><path d="M35 46L32 51 36 50" stroke="#9a8a86" stroke-width="0.7" fill="none"/><rect x="43" y="83" width="6.6" height="18" fill="#f0ddd5"/><path d="M62 44L66 40 75 39 76 44 71 50 63 50Z" fill="#e9c6b2"/><path d="M66 40L75 39 74 43 67 44Z" fill="#f3e6e0"/><path d="M83 37L95 30 100 40 99 58 88 61Z" fill="#5d5b68"/><path d="M87 58L97 54" stroke="#c9c5cc" stroke-width="1.6"/><path d="M96 40L100 58" stroke="#9c8f98" stroke-width="3"/></g></g><rect x="2821" y="91.9" width="42.5" height="5.3" fill="#fff"/><rect x="2821" y="103.4" width="42.5" height="5.3" fill="#fff"/><rect x="2821" y="114.9" width="42.5" height="5.3" fill="#fff"/></svg></div>
<div id="sidebar" class="abs"><div class="div" style="top:180px"></div><div class="div" style="top:577.3px"></div><div class="div" style="top:688px"></div></div>
<div style="position:absolute;left:0;top:0;z-index:7"><svg class="abs" style="left:0;top:0" width="136" height="1466" viewBox="0 0 136 1466"><defs><pattern id="tripat" width="7" height="12.12" patternUnits="userSpaceOnUse" patternTransform="translate(67.5 531) rotate(90) scale(1.2376)"><path d="M0 0H7M0 6.06H7M0 12.12H7M0 0L7 12.12M7 0L0 12.12M3.5 -6L10.5 6M3.5 18L10.5 6M-3.5 6L3.5 -6 M-3.5 6 L3.5 18" stroke="#6f767c" stroke-width="0.75" fill="none"/></pattern><linearGradient id="gaugeg" x1="0" x2="1" y1="0" y2="0"><stop offset="0" stop-color="#b0b4b7" stop-opacity="0.25"/><stop offset="0.4" stop-color="#c2c5c7" stop-opacity="0.8"/><stop offset="1" stop-color="#d6d8d9"/></linearGradient></defs><clipPath id="mlogo"><circle cx="63.9" cy="104.1" r="40"/></clipPath><g clip-path="url(#mlogo)" stroke="#2c343b" stroke-width="1.7" stroke-linejoin="round"><polygon points="3.6,45.85 3.6,69.15 23.7,57.5" fill="#62d4b4"/><polygon points="23.7,34.2 23.7,57.5 3.6,45.85" fill="#52b6a6"/><polygon points="3.6,69.15 3.6,92.45 23.7,80.8" fill="#62d4b4"/><polygon points="23.7,57.5 23.7,80.8 3.6,69.15" fill="#52b6a6"/><polygon points="3.6,92.45 3.6,115.75 23.7,104.1" fill="#62d4b4"/><polygon points="23.7,80.8 23.7,104.1 3.6,92.45" fill="#52b6a6"/><polygon points="3.6,115.75 3.6,139.05 23.7,127.4" fill="#62d4b4"/><polygon points="23.7,104.1 23.7,127.4 3.6,115.75" fill="#52b6a6"/><polygon points="3.6,139.05 3.6,162.35 23.7,150.7" fill="#62d4b4"/><polygon points="23.7,127.4 23.7,150.7 3.6,139.05" fill="#52b6a6"/><polygon points="3.6,162.35 3.6,185.65 23.7,174" fill="#62d4b4"/><polygon points="23.7,150.7 23.7,174 3.6,162.35" fill="#52b6a6"/><polygon points="23.7,34.2 23.7,57.5 43.8,45.85" fill="#62d4b4"/><polygon points="43.8,45.85 43.8,69.15 23.7,57.5" fill="#52b6a6"/><polygon points="23.7,57.5 23.7,80.8 43.8,69.15" fill="#62d4b4"/><polygon points="43.8,69.15 43.8,92.45 23.7,80.8" fill="#52b6a6"/><polygon points="23.7,80.8 23.7,104.1 43.8,92.45" fill="#62d4b4"/><polygon points="43.8,92.45 43.8,115.75 23.7,104.1" fill="#52b6a6"/><polygon points="23.7,104.1 23.7,127.4 43.8,115.75" fill="#62d4b4"/><polygon points="43.8,115.75 43.8,139.05 23.7,127.4" fill="#52b6a6"/><polygon points="23.7,127.4 23.7,150.7 43.8,139.05" fill="#62d4b4"/><polygon points="43.8,139.05 43.8,162.35 23.7,150.7" fill="#52b6a6"/><polygon points="23.7,150.7 23.7,174 43.8,162.35" fill="#62d4b4"/><polygon points="43.8,162.35 43.8,185.65 23.7,174" fill="#52b6a6"/><polygon points="43.8,45.85 43.8,69.15 63.9,57.5" fill="#62d4b4"/><polygon points="63.9,34.2 63.9,57.5 43.8,45.85" fill="#52b6a6"/><polygon points="43.8,69.15 43.8,92.45 63.9,80.8" fill="#62d4b4"/><polygon points="63.9,57.5 63.9,80.8 43.8,69.15" fill="#52b6a6"/><polygon points="43.8,92.45 43.8,115.75 63.9,104.1" fill="#62d4b4"/><polygon points="63.9,80.8 63.9,104.1 43.8,92.45" fill="#52b6a6"/><polygon points="43.8,115.75 43.8,139.05 63.9,127.4" fill="#62d4b4"/><polygon points="63.9,104.1 63.9,127.4 43.8,115.75" fill="#52b6a6"/><polygon points="43.8,139.05 43.8,162.35 63.9,150.7" fill="#62d4b4"/><polygon points="63.9,127.4 63.9,150.7 43.8,139.05" fill="#52b6a6"/><polygon points="43.8,162.35 43.8,185.65 63.9,174" fill="#62d4b4"/><polygon points="63.9,150.7 63.9,174 43.8,162.35" fill="#52b6a6"/><polygon points="63.9,34.2 63.9,57.5 84,45.85" fill="#62d4b4"/><polygon points="84,45.85 84,69.15 63.9,57.5" fill="#52b6a6"/><polygon points="63.9,57.5 63.9,80.8 84,69.15" fill="#62d4b4"/><polygon points="84,69.15 84,92.45 63.9,80.8" fill="#52b6a6"/><polygon points="63.9,80.8 63.9,104.1 84,92.45" fill="#62d4b4"/><polygon points="84,92.45 84,115.75 63.9,104.1" fill="#52b6a6"/><polygon points="63.9,104.1 63.9,127.4 84,115.75" fill="#62d4b4"/><polygon points="84,115.75 84,139.05 63.9,127.4" fill="#52b6a6"/><polygon points="63.9,127.4 63.9,150.7 84,139.05" fill="#62d4b4"/><polygon points="84,139.05 84,162.35 63.9,150.7" fill="#52b6a6"/><polygon points="63.9,150.7 63.9,174 84,162.35" fill="#62d4b4"/><polygon points="84,162.35 84,185.65 63.9,174" fill="#52b6a6"/><polygon points="84,45.85 84,69.15 104.1,57.5" fill="#62d4b4"/><polygon points="104.1,34.2 104.1,57.5 84,45.85" fill="#52b6a6"/><polygon points="84,69.15 84,92.45 104.1,80.8" fill="#62d4b4"/><polygon points="104.1,57.5 104.1,80.8 84,69.15" fill="#52b6a6"/><polygon points="84,92.45 84,115.75 104.1,104.1" fill="#62d4b4"/><polygon points="104.1,80.8 104.1,104.1 84,92.45" fill="#52b6a6"/><polygon points="84,115.75 84,139.05 104.1,127.4" fill="#62d4b4"/><polygon points="104.1,104.1 104.1,127.4 84,115.75" fill="#52b6a6"/><polygon points="84,139.05 84,162.35 104.1,150.7" fill="#62d4b4"/><polygon points="104.1,127.4 104.1,150.7 84,139.05" fill="#52b6a6"/><polygon points="84,162.35 84,185.65 104.1,174" fill="#62d4b4"/><polygon points="104.1,150.7 104.1,174 84,162.35" fill="#52b6a6"/><polygon points="104.1,34.2 104.1,57.5 124.2,45.85" fill="#62d4b4"/><polygon points="124.2,45.85 124.2,69.15 104.1,57.5" fill="#52b6a6"/><polygon points="104.1,57.5 104.1,80.8 124.2,69.15" fill="#62d4b4"/><polygon points="124.2,69.15 124.2,92.45 104.1,80.8" fill="#52b6a6"/><polygon points="104.1,80.8 104.1,104.1 124.2,92.45" fill="#62d4b4"/><polygon points="124.2,92.45 124.2,115.75 104.1,104.1" fill="#52b6a6"/><polygon points="104.1,104.1 104.1,127.4 124.2,115.75" fill="#62d4b4"/><polygon points="124.2,115.75 124.2,139.05 104.1,127.4" fill="#52b6a6"/><polygon points="104.1,127.4 104.1,150.7 124.2,139.05" fill="#62d4b4"/><polygon points="124.2,139.05 124.2,162.35 104.1,150.7" fill="#52b6a6"/><polygon points="104.1,150.7 104.1,174 124.2,162.35" fill="#62d4b4"/><polygon points="124.2,162.35 124.2,185.65 104.1,174" fill="#52b6a6"/></g><path transform="translate(50.7 202.4) scale(1.708)" fill="#fff" d="M3 13h8V3H3v10zm0 8h8v-6H3v6zm10 0h8V11h-8v10zm0-18v6h8V3h-8z"/><path d="M73.91 300.94 L76.99 302.98 L74.09 308 L70.78 306.35 L67.43 308.29 L67.2 311.98 L61.4 311.98 L61.17 308.29 L57.82 306.35 L54.51 308 L51.61 302.98 L54.69 300.94 L54.69 297.06 L51.61 295.02 L54.51 290 L57.82 291.65 L61.17 289.71 L61.4 286.02 L67.2 286.02 L67.43 289.71 L70.78 291.65 L74.09 290 L76.99 295.02 L73.91 297.06Z M59.9 299 a4.4 4.4 0 1 0 8.8 0 a4.4 4.4 0 1 0 -8.8 0Z" fill="#d2d3d4" fill-rule="evenodd" stroke="#d2d3d4" stroke-width="1.2" stroke-linejoin="round"/><path d="M88.94 288.04 L91.03 288.09 L91.03 291.11 L88.94 291.16 L87.98 292.84 L88.97 294.68 L86.36 296.18 L85.27 294.4 L83.33 294.4 L82.24 296.18 L79.63 294.68 L80.62 292.84 L79.66 291.16 L77.57 291.11 L77.57 288.09 L79.66 288.04 L80.62 286.36 L79.63 284.52 L82.24 283.02 L83.33 284.8 L85.27 284.8 L86.36 283.02 L88.97 284.52 L87.98 286.36Z M82 289.6 a2.3 2.3 0 1 0 4.6 0 a2.3 2.3 0 1 0 -4.6 0Z" fill="#d2d3d4" fill-rule="evenodd" stroke="#d2d3d4" stroke-width="1.2" stroke-linejoin="round"/><path d="M89.1 309.37 L90.88 310.46 L89.38 313.07 L87.54 312.08 L85.86 313.04 L85.81 315.13 L82.79 315.13 L82.74 313.04 L81.06 312.08 L79.22 313.07 L77.72 310.46 L79.5 309.37 L79.5 307.43 L77.72 306.34 L79.22 303.73 L81.06 304.72 L82.74 303.76 L82.79 301.67 L85.81 301.67 L85.86 303.76 L87.54 304.72 L89.38 303.73 L90.88 306.34 L89.1 307.43Z M82 308.4 a2.3 2.3 0 1 0 4.6 0 a2.3 2.3 0 1 0 -4.6 0Z" fill="#d2d3d4" fill-rule="evenodd" stroke="#d2d3d4" stroke-width="1.2" stroke-linejoin="round"/><g fill="none" stroke-linecap="round"><line x1="61.8" y1="384.3" x2="80.8" y2="366.2" stroke="#fff" stroke-width="4.4"/><circle cx="59.6" cy="386.6" r="3.7" stroke="#fff" stroke-width="3"/><circle cx="83.2" cy="363.9" r="3.7" stroke="#fff" stroke-width="3"/><line x1="61" y1="366" x2="82" y2="386" stroke="#2c343b" stroke-width="7.6"/><line x1="60" y1="365" x2="83" y2="387" stroke="#fff" stroke-width="5.2"/></g><circle cx="58.8" cy="363" r="5" fill="#fff"/><circle cx="84.3" cy="388.2" r="5" fill="#fff"/><path d="M52.6 356.9L59.4 362.9" stroke="#2c343b" stroke-width="4"/><path d="M90.4 394.2L83.8 388.3" stroke="#2c343b" stroke-width="4"/><polygon points="49.9,445.88 51.13,444.28 52.47,442.78 53.9,441.37 55.44,440.06 57.06,438.87 58.75,437.79 60.52,436.83 62.36,435.99 64.24,435.29 66.17,434.72 68.14,434.28 70.13,433.99 72.14,433.83 74.15,433.81 76.16,433.93 78.15,434.19 80.13,434.59 82.07,435.13 83.96,435.8 85.81,436.6 87.6,437.53 89.32,438.58 90.96,439.74 92.51,441.02 89.7,444.21 88.54,442.9 87.27,441.68 85.9,440.54 84.43,439.5 82.88,438.57 81.24,437.75 79.54,437.04 77.77,436.47 75.96,436.03 74.1,435.72 72.21,435.55 70.3,435.53 68.39,435.65 66.48,435.91 64.59,436.32 62.72,436.87 60.89,437.57 59.12,438.41 57.41,439.38 55.77,440.48 54.22,441.71 52.76,443.06 51.41,444.52 50.19,446.08" fill="url(#gaugeg)"/><line x1="74" y1="433.31" x2="73.89" y2="438.8" stroke="#2c343b" stroke-width="0.7"/><line x1="78.88" y1="433.82" x2="77.86" y2="439.22" stroke="#2c343b" stroke-width="0.7"/><line x1="83.61" y1="435.13" x2="81.7" y2="440.29" stroke="#2c343b" stroke-width="0.7"/><line x1="88.48" y1="437.46" x2="85.66" y2="442.18" stroke="#2c343b" stroke-width="0.7"/><line x1="68.9" y1="451" x2="75.8" y2="441" stroke="#e2e2e2" stroke-width="1.2"/><circle cx="68.3" cy="451.9" r="1.5" fill="#2c343b" stroke="#e2e2e2" stroke-width="0.8"/><path d="M67.52 515.09L67.52 527.82Q70.1 537.5 83.9 532.1A16 16 0 1 1 67.52 515.09Z" fill="#d6d8d9"/><path d="M67.52 515.09L67.52 527.82Q70.1 537.5 83.9 532.1A16 16 0 1 1 67.52 515.09Z" fill="url(#tripat)"/><path d="M75.07 507.87L75.07 523.5Q82.83 531.6 90.7 522.2A16.1 16.1 0 0 0 75.07 507.87Z" fill="#dcdedf"/><path d="M75.07 507.87L75.07 523.5Q82.83 531.6 90.7 522.2A16.1 16.1 0 0 0 75.07 507.87Z" fill="url(#tripat)"/><polygon points="71,636 71,618 87.2,627" fill="#1cb99c"/><polygon points="71,636 87.2,627 87.2,645" fill="#1aa68d"/><polygon points="71,636 87.2,645 71,654" fill="#1cb99c"/><polygon points="71,636 71,654 54.8,645" fill="#1aa68d"/><polygon points="71,636 54.8,645 54.8,627" fill="#1cb99c"/><polygon points="71,636 54.8,627 71,618" fill="#1aa68d"/><line x1="71" y1="616.2" x2="71" y2="655.8" stroke="#2c343b" stroke-width="1.8"/><line x1="88.82" y1="626.1" x2="53.18" y2="645.9" stroke="#2c343b" stroke-width="1.8"/><line x1="88.82" y1="645.9" x2="53.18" y2="626.1" stroke="#2c343b" stroke-width="1.8"/><path d="M136 1201H106a7 7 0 0 0-7 7V1284a7 7 0 0 0 7 7H136Z" fill="#545c62"/><path d="M110.5 1232.5L124 1246 110.5 1259.5" fill="none" stroke="#dfe2e3" stroke-width="4.2"/><circle cx="68" cy="1342.8" r="16.9" fill="#c9cdd0"/><text x="68" y="1352.5" text-anchor="middle" font-family='"Liberation Sans", Arial, sans-serif' font-weight="bold" font-size="27" fill="#2c343b">?</text><text x="25.7" y="1423.8" font-family='"Liberation Sans", Arial, sans-serif' font-size="23.4" fill="#eef0f1" textLength="82.8" lengthAdjust="spacingAndGlyphs">v0.8.179</text></svg></div>
<div id="topstrip" class="abs"></div>
<div id="winb" class="abs"></div>
</body></html>
